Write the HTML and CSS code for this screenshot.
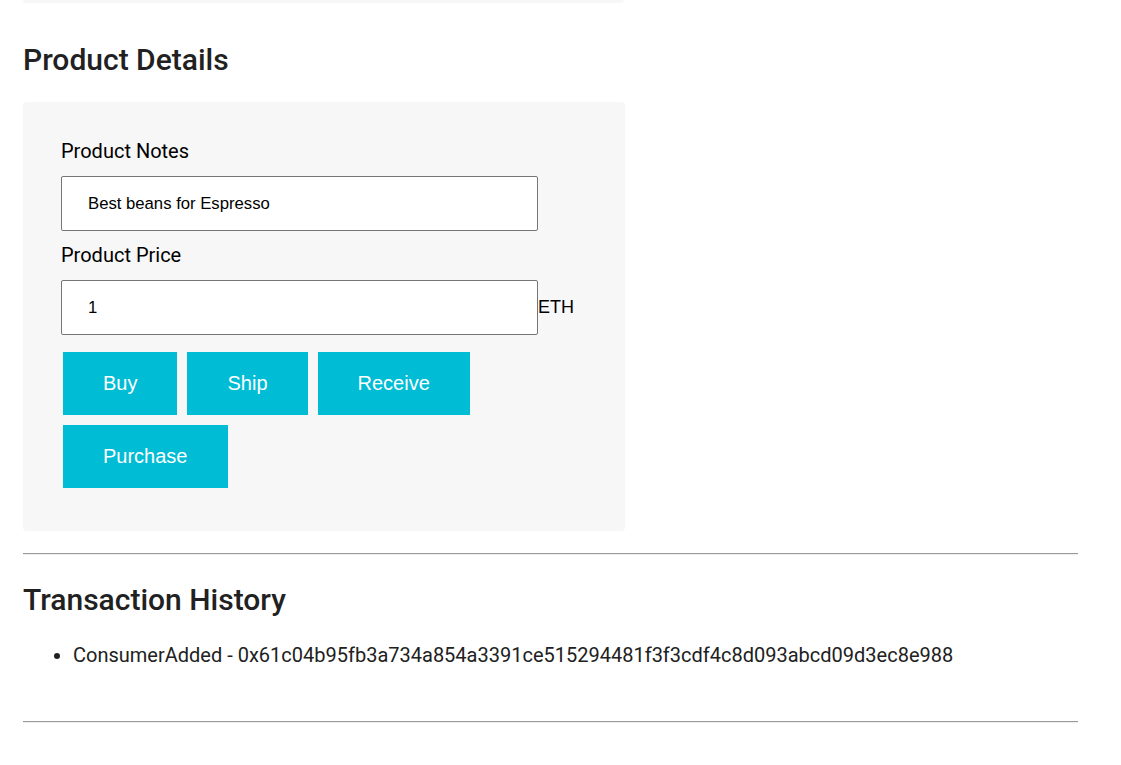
FILE: index.html
```html
<!DOCTYPE html>
<html>
<head>
<meta charset="utf-8">
<link rel="stylesheet" href="styles.css">
</head>
<body>
<div class="page">
  <div class="prev-card"></div>
  <h2 class="title">Product Details</h2>
  <div class="card">
    <label class="label">Product Notes</label>
    <div class="field-row">
      <input class="input" type="text" value="Best beans for Espresso">
    </div>
    <label class="label">Product Price</label>
    <div class="field-row">
      <input class="input" type="text" value="1"><span class="unit">ETH</span>
    </div>
    <div class="buttons">
      <button class="btn">Buy</button>
      <button class="btn">Ship</button>
      <button class="btn">Receive</button>
      <button class="btn">Purchase</button>
    </div>
  </div>
  <hr class="rule">
  <h2 class="title title-history">Transaction History</h2>
  <ul class="history">
    <li>ConsumerAdded - 0x61c04b95fb3a734a854a3391ce515294481f3f3cdf4c8d093abcd09d3ec8e988</li>
  </ul>
  <hr class="rule rule-bottom">
</div>
</body>
</html>
```

FILE: styles.css
```css
html, body {
  margin: 0;
  padding: 0;
  background: #fff;
}
body {
  font-family: Roboto, "Liberation Sans", sans-serif;
  color: #212121;
}
.page {
  padding-left: 23px;
  width: 1055px;
}
.prev-card {
  width: 601px;
  height: 3px;
  background: #f7f7f7;
  border-radius: 0 0 4px 4px;
}
.title {
  margin: 0;
  font-size: 30px;
  font-weight: 500;
  line-height: 34px;
  padding-top: 40px;
  padding-bottom: 25px;
  color: #212121;
}
.card {
  width: 564px;
  background: #f7f7f7;
  border-radius: 4px;
  padding: 38px 0 43px 38px;
  display: flex;
  flex-direction: column;
}
.label {
  font-size: 20px;
  line-height: 22px;
  color: #000;
  margin-bottom: 14px;
}
.field-row {
  display: flex;
  align-items: center;
  margin-bottom: 13px;
}
.input {
  box-sizing: border-box;
  width: 477px;
  height: 55px;
  border: 1px solid #767676;
  border-radius: 2px;
  padding: 0 0 0 26px;
  font-family: "Liberation Sans", Arial, sans-serif;
  font-size: 16.7px;
  color: #000;
  background: #fff;
  margin: 0;
}
.unit {
  font-family: "Liberation Sans", Arial, sans-serif;
  font-size: 18px;
  color: #000;
}
.buttons {
  display: flex;
  flex-wrap: wrap;
  gap: 10px 10px;
  width: 420px;
  margin-left: 2px;
  margin-top: 4px;
}
.btn {
  height: 63px;
  padding: 0 40px;
  border: none;
  border-radius: 0;
  background: #00bcd4;
  color: #fff;
  font-family: "Liberation Sans", Arial, sans-serif;
  font-size: 20px;
  margin: 0;
}
.rule {
  margin: 22px 0 0 0;
  border: 0;
  border-top: 1px solid #9a9a9a;
  border-bottom: 1px solid #eeeeee;
  height: 0;
}
.title-history {
  padding-top: 28px;
  padding-bottom: 0;
}
.history {
  margin: 27px 0 0 0;
  padding-left: 50px;
  font-size: 20px;
  line-height: 22px;
  color: #212121;
}
.rule-bottom {
  margin-top: 55px;
}
```
